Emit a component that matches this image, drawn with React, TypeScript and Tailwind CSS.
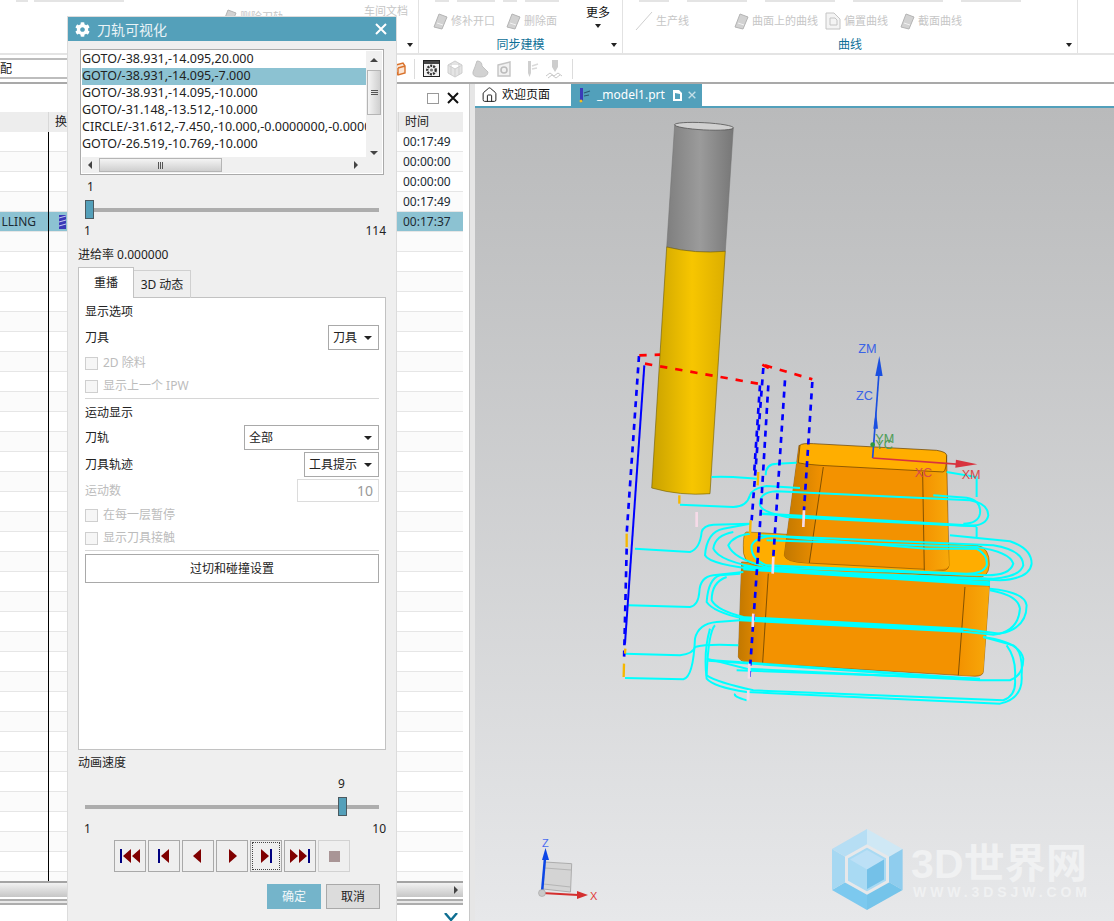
import React from 'react';
import { FaCog } from 'react-icons/fa';
import { House } from 'lucide-react';

const listRows = [
  'GOTO/-38.931,-14.095,20.000',
  'GOTO/-38.931,-14.095,-7.000',
  'GOTO/-38.931,-14.095,-10.000',
  'GOTO/-31.148,-13.512,-10.000',
  'CIRCLE/-31.612,-7.450,-10.000,-0.0000000,-0.00000',
  'GOTO/-26.519,-10.769,-10.000',
];

const times: Record<number, string> = { 0: '00:17:49', 1: '00:00:00', 2: '00:00:00', 3: '00:17:49', 4: '00:17:37' };
const tableRows = Array.from({ length: 38 }, (_, i) => i);

// toolpath traces, in 3x coordinates of the part area
const cyanLoops = [
  'M335 435 C400 432 450 440 475 440',
  'M240 518 L400 525 Q440 525 450 490 Q455 470 500 462 L600 468',
  'M480 520 Q475 480 530 478 L1110 505 Q1165 515 1165 550 Q1160 580 1110 582 L560 555 Q485 540 480 520',
  'M1000 490 L1100 497 Q1145 505 1140 545 Q1135 575 1090 575',
  'M497 430 Q497 395 530 395 L590 392',
  'M1040 420 L1130 435 L1130 495',
  'M1130 585 L1130 615',
  'M105 650 L270 660 Q300 650 305 600 Q310 580 340 578 L450 575',
  'M1050 610 L1230 628 Q1295 650 1295 695 Q1290 740 1200 745 L500 715 Q330 700 315 670 Q320 600 370 590 L450 575',
  'M480 610 L1180 640 Q1270 655 1270 700 Q1260 735 1180 740 L530 715 Q360 695 340 650 Q345 610 400 600',
  'M500 625 L1130 645 Q1230 660 1240 695 Q1230 730 1160 730 L500 705 Q400 680 385 640 Q400 610 450 605',
  'M520 612 L980 650 L1130 650 Q1165 670 1160 700 Q1150 725 1100 725 L500 700 Q450 680 455 640 Q465 615 520 612',
  'M85 820 L270 825 Q295 820 298 780 Q300 735 340 730 L430 720',
  'M1170 770 Q1275 780 1280 820 Q1280 890 1200 905 L1090 890 L420 855',
  'M1170 775 Q1255 790 1260 830 Q1255 900 1180 908 L1100 900 L420 865',
  'M430 860 Q340 840 320 810 Q325 740 360 730 L420 725',
  'M430 855 Q350 835 335 805 Q335 750 380 735',
  'M75 965 L240 970 Q280 965 285 945 Q320 935 415 940',
  'M75 1038 L250 1042 Q280 1035 285 920 Q295 875 350 870 L420 865',
  'M320 980 L440 1010 L1140 1045 L1230 1045 Q1270 1030 1270 980 Q1260 930 1150 915',
  'M330 890 Q310 960 320 1040 Q340 1065 440 1080 L1200 1115 Q1270 1100 1265 1030 Q1270 960 1240 940 L1150 915',
  'M345 880 Q325 900 320 1030 Q350 1050 460 1075 L1210 1105 Q1250 1090 1245 1040 Q1250 980 1220 940',
  'M410 1015 L1140 1040',
  'M405 1085 Q400 1095 440 1105',
];

const blueDashes = [
  'M117 72 L80 605',
  'M80 650 L72 990',
  'M490 108 L455 565',
  'M505 160 L478 610',
  'M480 160 L462 430',
  'M478 610 L448 1040',
  'M555 145 L520 675',
  'M637 150 L612 535',
];

const yellowBits = ['M238 490 L238 515', 'M475 420 L473 460', 'M452 565 L450 605', 'M80 605 L80 645', 'M76 950 L75 965', 'M72 995 L71 1035'];
const whiteBits = ['M290 540 L290 585', 'M612 535 L610 585', 'M520 675 L518 725', 'M460 845 L458 885', 'M448 995 L447 1040', 'M445 1075 L444 1105'];
const redDashes = ['M118 70 L180 68', 'M135 95 L480 156', 'M495 100 L637 142', 'M487 98 L525 118'];

function CloseX({ className, color }: { className: string; color: string }) {
  return (
    <svg className={className} viewBox="0 0 12 12" fill="none" stroke={color} strokeWidth="2">
      <path d="M1 1 L11 11 M11 1 L1 11" />
    </svg>
  );
}

function GrayIcon({ kind }: { kind: string }) {
  if (kind === 'line') {
    return (
      <svg className="h-[20px] w-[18px] shrink-0" viewBox="0 0 18 20" fill="none" stroke="#cfcfcf">
        <path d="M1 19 L17 1" />
      </svg>
    );
  }
  if (kind === 'page') {
    return (
      <svg className="h-[18px] w-[16px] shrink-0" viewBox="0 0 16 18" fill="#f4f4f4" stroke="#c4c4c4">
        <path d="M1 1 H9 L15 7 V17 H1 Z M5 6 H10 L12 8 V13 H5 Z" />
      </svg>
    );
  }
  return (
    <svg className="h-[18px] w-[16px] shrink-0" viewBox="0 0 16 18">
      <path d="M2 15 L7 2 L15 5 L10 17 Z" fill="#d2d2d2" stroke="#b4b4b4" />
      <path d="M5 11 L11 13" stroke="#f2f2f2" />
    </svg>
  );
}

function RibbonItem({ kind, label, gap }: { kind: string; label: string; gap: string }) {
  return (
    <div className={`flex items-center ${gap}`}>
      <GrayIcon kind={kind} />
      <span className="ml-[3px] whitespace-nowrap text-[11px] text-[#c6c6c6]">{label}</span>
    </div>
  );
}

function GroupLabel({ label }: { label?: string }) {
  return (
    <div className="relative flex h-[16px] items-center justify-center text-[12px] text-[#0d6f97]">
      {label}
      <span className="absolute right-[5px] top-[6px] h-0 w-0 border-x-[3px] border-t-[4px] border-x-transparent border-t-[#222]" />
    </div>
  );
}

// the row above is cut off by the window edge, only its lower edge shows
function ClippedRow({ className, widths }: { className: string; widths: string[] }) {
  return (
    <div className={`flex h-[2px] shrink-0 ${className}`}>
      {widths.map((w, i) => (
        <span key={i} className={`h-[2px] bg-[#e4e4e4] ${w}`} />
      ))}
    </div>
  );
}

function Ribbon() {
  return (
    <div className="flex h-[55px] shrink-0 border-b-2 border-[#e4e4e4] bg-white">
      <div className="flex w-[419px] shrink-0 flex-col border-r border-[#e2e2e2]">
        <ClippedRow className="gap-[6px] pl-[16px]" widths={['w-[12px]', 'w-[90px]']} />
        <div className="flex h-[36px] justify-end pr-[10px]">
          <div className="mr-[80px] mt-[6px]">
            <RibbonItem kind="shape" label="删除刀轨" gap="" />
          </div>
          <span className="mt-px text-[11px] text-[#c6c6c6]">车间文档</span>
        </div>
        <GroupLabel />
      </div>
      <div className="flex w-[204px] shrink-0 flex-col border-r border-[#e2e2e2]">
        <ClippedRow className="gap-[8px] pl-[16px]" widths={['w-[14px]', 'w-[38px]', 'w-[14px]', 'w-[34px]']} />
        <div className="flex h-[36px] pl-[13px] pt-[3px]">
          <RibbonItem kind="shape" label="修补开口" gap="mr-[10px]" />
          <RibbonItem kind="shape" label="删除面" gap="" />
          <div className="ml-[29px] flex flex-col items-center self-start">
            <span className="mt-[-1px] text-[12px] leading-[18px] text-[#111]">更多</span>
            <span className="mt-[2px] h-0 w-0 border-x-[3px] border-t-[4px] border-x-transparent border-t-[#222]" />
          </div>
        </div>
        <GroupLabel label="同步建模" />
      </div>
      <div className="flex w-[455px] shrink-0 flex-col border-r border-[#e2e2e2]">
        <ClippedRow className="gap-[18px] pl-[16px]" widths={['w-[30px]', 'w-[60px]', 'w-[70px]', 'w-[90px]', 'w-[60px]']} />
        <div className="flex h-[36px] pl-[12px] pt-[3px]">
          <RibbonItem kind="line" label="生产线" gap="mr-[44px]" />
          <RibbonItem kind="shape" label="曲面上的曲线" gap="mr-[7px]" />
          <RibbonItem kind="page" label="偏置曲线" gap="mr-[11px]" />
          <RibbonItem kind="shape" label="截面曲线" gap="" />
        </div>
        <GroupLabel label="曲线" />
      </div>
    </div>
  );
}

function ToolIcon({ children }: { children: React.ReactNode }) {
  return (
    <svg className="h-[20px] w-[20px] shrink-0" viewBox="0 0 20 20">
      {children}
    </svg>
  );
}

function Toolbar() {
  return (
    <div className="flex h-[27px] shrink-0 items-center bg-white">
      <div className="flex h-[21px] w-[390px] shrink-0 items-center border-y-2 border-[#bdbdbd] text-[12px] leading-none text-[#222]">
        配
      </div>
      <svg className="ml-[4px] h-[14px] w-[12px] shrink-0" viewBox="0 0 12 14" fill="#fbe6d5" stroke="#d9722c" strokeWidth="1.4">
        <path d="M2 3 L9 1 L11 4 V11 L4 13 L2 10 Z M4 6 L11 4 M4 6 V13" />
      </svg>
      <span className="ml-[8px] h-[20px] w-px bg-[#dcdcdc]" />
      <div className="ml-[8px] flex items-center gap-[5px]">
        <svg className="h-[17px] w-[17px] shrink-0" viewBox="0 0 17 17">
          <rect x="0.5" y="0.5" width="16" height="16" fill="#f2f2f2" stroke="#222" />
          <rect x="1" y="1" width="15" height="3" fill="#444" />
          <circle cx="8.5" cy="10" r="4.2" fill="none" stroke="#333" strokeWidth="2.4" strokeDasharray="2 1" />
          <circle cx="8.5" cy="10" r="1.6" fill="#777" />
        </svg>
        <ToolIcon>
          <path d="M10 2 L17 6 V14 L10 18 L3 14 V6 Z M3 6 L10 10 L17 6 M10 10 V18 M6 4 V16 M14 4 V16" fill="#e4e4e4" stroke="#cfcfcf" />
        </ToolIcon>
        <ToolIcon>
          <path d="M7 2 Q12 2 12 7 L18 13 Q18 18 10 18 Q2 18 3 13 Q5 8 7 2 Z" fill="#d2d2d2" stroke="#c2c2c2" />
        </ToolIcon>
        <ToolIcon>
          <path d="M3 6 L15 3 V17 H3 Z" fill="#f1f1f1" stroke="#c4c4c4" strokeWidth="1.4" />
          <circle cx="9" cy="11" r="3" fill="none" stroke="#bcbcbc" strokeWidth="1.6" />
        </ToolIcon>
        <ToolIcon>
          <path d="M8 2 H11 V14 L9.5 18 L8 14 Z" fill="#cfcfcf" />
          <path d="M12 7 L18 5 M12 10 L17 9" stroke="#dadada" strokeWidth="1.4" />
        </ToolIcon>
        <ToolIcon>
          <path d="M7 1 H13 V8 L10 13 L7 8 Z" fill="#cdcdcd" />
          <path d="M1 17 L5 14 L9 17 L13 14 L17 17 M3 19 L7 16 L11 19 L15 16" fill="none" stroke="#c8c8c8" />
        </ToolIcon>
      </div>
      <span className="ml-[7px] h-[20px] w-px bg-[#dcdcdc]" />
    </div>
  );
}

function LeftPanel() {
  return (
    <div className="flex h-full w-[475px] shrink-0 flex-col border-t-2 border-[#a9a9a9] bg-white">
      <div className="flex min-h-0 flex-1 border-r-[5px] border-[#e6e6e6]">
        <div className="flex min-w-0 flex-1 flex-col border-r border-[#c8c8c8] pr-[6px]">
          <div className="flex h-[28px] shrink-0 items-center justify-end pr-[4px]">
            <span className="mr-[8px] h-[11px] w-[12px] border border-[#999] bg-white" />
            <CloseX className="h-[12px] w-[12px]" color="#111" />
          </div>
          <div className="flex h-[20px] shrink-0 items-center bg-[#ededed] text-[12px] text-[#222]">
            <span className="h-full w-[49px] border-r border-[#d8d8d8]" />
            <span className="flex-1 pl-[6px]">换</span>
            <span className="flex h-full w-[65px] items-center border-l border-[#d8d8d8] pl-[6px]">时间</span>
          </div>
          <div className="min-h-0 flex-1 overflow-hidden">
            {tableRows.map((i) => (
              <div
                key={i}
                className={`flex h-[20px] items-center border-b border-[#e6e6e6] text-[12px] text-[#1c2a33] ${i === 4 ? 'bg-[#8cc2d2]' : i % 2 ? 'bg-[#fbfbfb]' : 'bg-white'}`}
              >
                <span className="flex h-[20px] w-[49px] shrink-0 items-center justify-end overflow-hidden border-r border-black pr-[12px]">
                  {i === 4 ? 'LLING' : ''}
                </span>
                <span className="flex-1 pl-[10px]">
                  {i === 4 && (
                    <svg className="h-[14px] w-[7px]" viewBox="0 0 7 14">
                      <rect width="7" height="14" fill="#3a3ab8" />
                      <path d="M0 3 L7 1 M0 7 L7 5 M0 11 L7 9" stroke="#c8ccf0" />
                    </svg>
                  )}
                </span>
                <span className="w-[60px] shrink-0">{times[i]}</span>
              </div>
            ))}
          </div>
          <div className="flex h-[16px] shrink-0 items-center justify-end border-t-2 border-[#a4a4a4] bg-gradient-to-b from-[#f2f2f2] to-[#c6c6c6] pr-[5px]">
            <span className="h-0 w-0 border-y-[4px] border-l-[4px] border-y-transparent border-l-[#444]" />
          </div>
          <div className="mt-[2px] h-[6px] shrink-0 border-y-2 border-[#adadad] bg-[#e8e8e8]" />
          <div className="flex h-[16px] shrink-0 items-end justify-end pr-[5px]">
            <svg className="h-[8px] w-[14px]" viewBox="0 0 14 8" fill="none" stroke="#0f6f92" strokeWidth="2.4">
              <path d="M1 0 L7 7 L13 0" />
            </svg>
          </div>
        </div>
      </div>
    </div>
  );
}

function Scene() {
  return (
    <svg className="block h-[815px] w-[639px]" viewBox="475 106 639 815">
      <defs>
        <linearGradient id="gray" x1="0" x2="1" y1="0" y2="0">
          <stop offset="0" stopColor="#7f7f7f" />
          <stop offset="0.5" stopColor="#9b9b9b" />
          <stop offset="1" stopColor="#777" />
        </linearGradient>
        <linearGradient id="yellow" x1="0" x2="1" y1="0" y2="0">
          <stop offset="0" stopColor="#c9a200" />
          <stop offset="0.55" stopColor="#f7c600" />
          <stop offset="1" stopColor="#dcae00" />
        </linearGradient>
        <linearGradient id="leftFace" x1="0" x2="1" y1="0" y2="0">
          <stop offset="0" stopColor="#c27800" />
          <stop offset="1" stopColor="#f39200" />
        </linearGradient>
        <linearGradient id="rightFace" x1="0" x2="1" y1="0" y2="0">
          <stop offset="0" stopColor="#f39200" />
          <stop offset="1" stopColor="#f8a90a" />
        </linearGradient>
      </defs>

      {/* tool */}
      <path d="M666.7 245 L674.7 122.7 L733.3 126 L725.3 249.3 Q695 252 666.7 245 Z" fill="url(#gray)" stroke="#6f6f6f" strokeWidth="0.5" />
      <ellipse cx="704" cy="124.3" rx="29.5" ry="3.6" transform="rotate(3 704 124.3)" fill="#d0d0d0" stroke="#555" strokeWidth="0.8" />
      <path d="M651.7 486 L666.7 245 Q695 252 725.3 249.3 L710 491.7 Q680 494 651.7 486 Z" fill="url(#yellow)" stroke="#6d5a00" strokeWidth="0.6" />

      <g transform="translate(600 330) scale(0.3333)">
        {/* lower block */}
        <path d="M425 690 L415 975 Q420 990 450 993 L1125 1033 Q1148 1033 1150 1020 L1168 765 L1168 740 Z" fill="#f39200" stroke="#5d3a00" strokeWidth="1.5" />
        <path d="M425 700 L415 975 Q420 990 488 993 L505 725 Z" fill="url(#leftFace)" />
        <path d="M1095 765 L1168 765 L1150 1020 Q1148 1033 1075 1030 Z" fill="url(#rightFace)" />
        <path d="M505 725 L488 993 M1095 765 L1075 1030" stroke="#4a3000" strokeWidth="2" fill="none" />
        {/* shelf */}
        <path d="M440 600 L1130 640 Q1170 645 1168 700 Q1165 740 1130 735 L470 700 Q425 695 430 640 Q430 600 440 600 Z" fill="#ffad00" stroke="#6b4800" strokeWidth="1.5" />
        {/* upper block */}
        <path d="M597 340 L553 670 Q555 690 620 693 L1030 715 Q1045 715 1047 700 L1040 370 L1030 420 Z" fill="#f39200" stroke="#5d3a00" strokeWidth="1.5" />
        <path d="M597 345 L553 670 Q555 690 628 693 L670 405 Z" fill="url(#leftFace)" />
        <path d="M968 420 L1038 420 L1047 700 Q1045 715 973 715 Z" fill="url(#rightFace)" />
        <path d="M670 405 L628 693 M968 420 L973 715" stroke="#4a3000" strokeWidth="2" fill="none" />
        <path d="M600 340 Q605 333 640 335 L1010 355 Q1040 360 1040 370 Q1040 415 1030 420 L660 400 Q600 395 595 392 Z" fill="#ffae00" stroke="#5d3a00" strokeWidth="2" />

        {/* cyan toolpath */}
        {cyanLoops.map((d) => (
          <path key={d} d={d} fill="none" stroke="#00ffff" strokeWidth="6" />
        ))}
        <path d="M430 708 L1170 755" stroke="#00ffff" strokeWidth="14" fill="none" />
        <path d="M420 860 L1090 895" stroke="#00ffff" strokeWidth="10" fill="none" />
        <path d="M325 985 L1140 1042" stroke="#00ffff" strokeWidth="8" fill="none" />
        <path d="M480 545 L1130 582" stroke="#00ffff" strokeWidth="7" fill="none" />

        {/* rapid moves */}
        <path d="M133 100 L75 935" stroke="#0000ff" strokeWidth="6" fill="none" />
        {blueDashes.map((d) => (
          <path key={d} d={d} fill="none" stroke="#0000ff" strokeWidth="8" strokeDasharray="18 16" />
        ))}
        {redDashes.map((d) => (
          <path key={d} d={d} fill="none" stroke="#ff0000" strokeWidth="8" strokeDasharray="22 24" />
        ))}
        {yellowBits.map((d) => (
          <path key={d} d={d} fill="none" stroke="#f6b800" strokeWidth="7" />
        ))}
        {whiteBits.map((d) => (
          <path key={d} d={d} fill="none" stroke="#f6dbe8" strokeWidth="8" />
        ))}

        {/* part axes */}
        <path d="M818 378 L838 110" stroke="#1a4fe0" strokeWidth="5" />
        <path d="M838 72 L826 132 L848 132 Z" fill="#1a4fe0" />
        <path d="M828 235 L820 290 L834 290 Z" fill="#1a4fe0" />
        <path d="M818 378 L1080 397" stroke="#d8333f" strokeWidth="5" />
        <path d="M1132 397 L1068 383 L1066 407 Z" fill="#d8333f" />
        <circle cx="818" cy="338" r="7" fill="#2f9a3c" />
        <g fontFamily="'Liberation Sans', sans-serif" fontSize="38">
          <text x="775" y="64" fill="#3a63e6">ZM</text>
          <text x="768" y="205" fill="#3a63e6">ZC</text>
          <text x="944" y="436" fill="#d84a4a">XC</text>
          <text x="1085" y="442" fill="#d84a4a">XM</text>
          <text x="826" y="332" fill="#4f9d57">YM</text>
          <text x="826" y="352" fill="#4f9d57">YC</text>
        </g>
      </g>

      {/* view triad */}
      <path d="M545 860 L571.7 861.7 L570.5 890 L543 887 Z" fill="#d4d4d4" stroke="#adadad" />
      <path d="M545 866 L571 868 M543.5 882 L570.5 885" stroke="#b5b5b5" fill="none" />
      <path d="M542 890 L545 856" stroke="#0c46e6" strokeWidth="2.5" />
      <path d="M545.5 846 L542 858 L549 858 Z" fill="#0c46e6" />
      <path d="M542 891 L578 893" stroke="#d42f2f" strokeWidth="2" />
      <path d="M588 893 L577 889 L577 897 Z" fill="#d42f2f" />
      <circle cx="542" cy="891" r="3.5" fill="#c9c9c9" stroke="#999" strokeWidth="0.5" />
      <g fontFamily="'Liberation Sans', sans-serif" fontSize="11">
        <text x="542" y="845" fill="#4a6cf0">Z</text>
        <text x="590" y="898" fill="#e03a3a">X</text>
      </g>

      {/* watermark */}
      <path d="M867 827 V867.5 L902.6 847 Z" fill="#cfe8f5" />
      <path d="M902.6 847 V888 L867 867.5 Z" fill="#8fcdee" />
      <path d="M902.6 888 L867 908 V867.5 Z" fill="#75c4ea" />
      <path d="M867 908 L832 888 L867 867.5 Z" fill="#7cc9ef" />
      <path d="M832 888 V847 L867 867.5 Z" fill="#a6d8f2" />
      <path d="M832 847 L867 827 V867.5 Z" fill="#b6def4" />
      <path d="M867 844 L887.5 855.5 V879.5 L867 891 L846.5 879.5 V855.5 Z" fill="#a9daf3" stroke="#e7e8ea" strokeWidth="3" />
      <path d="M867 848 L884 857.5 L867 867.5 L850 857.5 Z" fill="#bce0f6" />
      <path d="M867 867.5 L884 857.5 V877.5 L867 887 Z" fill="#74c1e8" />
      <text x="911" y="876" fill="#f0f1f2" fontSize="41" fontWeight="700" fontFamily="'Liberation Sans', 'Noto Sans CJK SC', sans-serif" textLength="176">
        3D世界网
      </text>
      <text x="913" y="895" fill="#f0f1f2" fontSize="14" fontWeight="700" fontFamily="'Liberation Sans', sans-serif" textLength="174">
        WWW.3DSJW.COM
      </text>
    </svg>
  );
}

function Viewport() {
  return (
    <div className="flex min-w-0 flex-1 flex-col">
      <div className="flex h-[24px] shrink-0 items-stretch border-t-2 border-[#a9a9a9] bg-white pl-px">
        <div className="flex w-[95px] items-center pl-[5px] text-[12px] text-[#111]">
          <House className="mr-[4px] h-[18px] w-[17px]" strokeWidth={1.4} color="#222" />
          欢迎页面
        </div>
        <div className="flex w-[131px] items-center bg-[#52a0bb] pl-[6px] text-[12px] text-white">
          <svg className="h-[15px] w-[14px] shrink-0" viewBox="0 0 14 15">
            <path d="M3 0 H6 V12 L4 15 L3 12 Z" fill="#3b3bb8" />
            <path d="M7 5 L13 3 M7 8 L12 7" stroke="#2a5a70" strokeWidth="1.2" />
            <circle cx="4" cy="13" r="1.5" fill="#f0c020" />
          </svg>
          <span className="ml-[6px]">_model1.prt</span>
          <svg className="ml-[8px] h-[11px] w-[9px] shrink-0" viewBox="0 0 9 11" fill="#fff">
            <path d="M0 0 H6 L9 3 V11 H0 Z M2 3 V9 H7 V4 Z" fillRule="evenodd" />
          </svg>
          <CloseX className="ml-[6px] h-[8px] w-[8px]" color="#c5dfe8" />
        </div>
      </div>
      <div className="h-[2px] shrink-0 bg-[#52a0bb]" />
      <div className="min-h-0 flex-1 overflow-hidden bg-gradient-to-b from-[#b9babb] to-[#e7e8ea]">
        <Scene />
      </div>
    </div>
  );
}

function Slider({ left, trackClass }: { left: string; trackClass: string }) {
  return (
    <div className={`relative h-[19px] ${trackClass}`}>
      <div className="absolute inset-x-0 top-[8px] h-[4px] bg-[#adadad]" />
      <div className={`absolute top-0 h-[19px] w-[9px] border border-[#4b5a60] bg-[#54a0ba] ${left}`} />
    </div>
  );
}

function CheckRow({ label, className }: { label: string; className: string }) {
  return (
    <div className={`flex h-[14px] items-center text-[#bcbcbc] ${className}`}>
      <span className="mr-[5px] h-[13px] w-[13px] border border-[#cfcfcf] bg-[#f6f6f6]" />
      {label}
    </div>
  );
}

function SelectRow({ label, value, width, className }: { label: string; value: string; width: string; className: string }) {
  return (
    <div className={`flex h-[25px] items-center justify-between ${className}`}>
      <span>{label}</span>
      <div className={`flex h-[25px] items-center justify-between border border-[#a9a9a9] pl-[4px] pr-[6px] ${width}`}>
        <span>{value}</span>
        <span className="h-0 w-0 border-x-[4px] border-t-[4px] border-x-transparent border-t-[#222]" />
      </div>
    </div>
  );
}

function TransportButton({ children, focus, disabled }: { children: React.ReactNode; focus?: boolean; disabled?: boolean }) {
  return (
    <div className={`flex h-[32px] w-[32px] items-center justify-center border ${disabled ? 'border-[#d2d2d2]' : 'border-[#a9a9a9]'} ${focus ? 'outline-1 -outline-offset-3 outline-dotted outline-[#444]' : ''}`}>
      <svg className="h-[16px] w-[24px]" viewBox="0 0 24 16">
        {children}
      </svg>
    </div>
  );
}

function Dialog() {
  return (
    <div className="absolute left-[68px] top-[17px] flex h-[904px] w-[328px] flex-col bg-[#efefef] text-[12px] text-[#222] shadow-[0_0_0_1px_#dcdcdc]">
      <div className="flex h-[24px] shrink-0 items-center bg-[#54a0ba] pl-[7px] pr-[9px] text-[14px] text-[#e9f3f6]">
        <FaCog className="h-[15px] w-[15px] text-white" />
        <span className="ml-[7px] flex-1">刀轨可视化</span>
        <CloseX className="h-[12px] w-[12px]" color="#fff" />
      </div>

      <div className="mx-[12px] mt-[8px] flex h-[126px] shrink-0 flex-col border border-[#aaa] bg-white p-px">
        <div className="flex min-h-0 flex-1">
          <div className="min-w-0 flex-1 overflow-hidden text-[12.5px]">
            {listRows.map((row, i) => (
              <div key={row} className={`flex h-[17px] items-center overflow-hidden whitespace-nowrap ${i === 1 ? 'bg-[#8cc2d2]' : ''}`}>
                {row}
              </div>
            ))}
          </div>
          <div className="relative w-[16px] shrink-0 bg-[#f0f0f0]">
            <span className="absolute left-[4px] top-[7px] h-0 w-0 border-x-[4px] border-b-[4px] border-x-transparent border-b-[#444]" />
            <div className="absolute inset-x-px top-[19px] flex h-[45px] flex-col items-center justify-center gap-px border border-[#b5b5b5] bg-gradient-to-r from-[#f4f4f4] to-[#cfcfcf]">
              <span className="h-px w-[7px] bg-[#555]" />
              <span className="h-px w-[7px] bg-[#555]" />
              <span className="h-px w-[7px] bg-[#555]" />
            </div>
            <span className="absolute bottom-[2px] left-[4px] h-0 w-0 border-x-[4px] border-t-[4px] border-x-transparent border-t-[#444]" />
          </div>
        </div>
        <div className="flex h-[16px] shrink-0 items-center bg-[#f0f0f0] pl-[6px] pr-[24px]">
          <span className="h-0 w-0 border-y-[4px] border-r-[4px] border-y-transparent border-r-[#444]" />
          <div className="ml-[7px] flex h-[14px] w-[123px] items-center justify-center gap-px border border-[#b5b5b5] bg-gradient-to-b from-[#f4f4f4] to-[#cfcfcf]">
            <span className="h-[7px] w-px bg-[#555]" />
            <span className="h-[7px] w-px bg-[#555]" />
            <span className="h-[7px] w-px bg-[#555]" />
          </div>
          <span className="ml-auto h-0 w-0 border-y-[4px] border-l-[4px] border-y-transparent border-l-[#444]" />
        </div>
      </div>

      <div className="ml-[19px] mt-[5px] h-[14px] leading-[14px]">1</div>
      <Slider left="left-[-5px]" trackClass="ml-[22px] mr-[17px] mt-[6px] shrink-0" />
      <div className="mx-[10px] mt-[5px] flex h-[14px] justify-between leading-[14px]">
        <span className="ml-[6px]">1</span>
        <span>114</span>
      </div>
      <div className="ml-[10px] mt-[10px] h-[14px] leading-[14px]">进给率 0.000000</div>

      <div className="relative z-10 ml-[10px] mt-[5px] flex h-[31px] shrink-0 items-start">
        <div className="flex h-[31px] w-[56px] items-center justify-center border border-b-0 border-[#c2c2c2] bg-white">重播</div>
        <div className="flex h-[28px] w-[57px] items-center justify-center self-end border border-b-0 border-l-0 border-[#d0d0d0]">3D 动态</div>
      </div>
      <div className="mx-[10px] mt-[-1px] flex h-[453px] shrink-0 flex-col border border-[#c2c2c2] bg-white px-[6px]">
        <div className="mt-[7px] h-[14px] leading-[14px]">显示选项</div>
        <SelectRow label="刀具" value="刀具" width="w-[51px]" className="mt-[6px]" />
        <CheckRow label="2D 除料" className="mt-[6px]" />
        <CheckRow label="显示上一个 IPW" className="mt-[9px]" />
        <div className="mt-[5px] h-px shrink-0 bg-[#d6d6d6]" />
        <div className="mt-[7px] h-[14px] leading-[14px]">运动显示</div>
        <SelectRow label="刀轨" value="全部" width="w-[135px]" className="mt-[5px]" />
        <SelectRow label="刀具轨迹" value="工具提示" width="w-[75px]" className="mt-[2px]" />
        <div className="mt-[2px] flex h-[23px] items-center justify-between text-[#bcbcbc]">
          <span>运动数</span>
          <div className="flex h-[23px] w-[82px] items-center justify-end border border-[#dcdcdc] pr-[5px] text-[14px] text-[#9a9a9a]">10</div>
        </div>
        <CheckRow label="在每一层暂停" className="mt-[6px]" />
        <CheckRow label="显示刀具接触" className="mt-[9px]" />
        <div className="mt-[5px] h-px shrink-0 bg-[#d6d6d6]" />
        <div className="mt-[3px] flex h-[29px] shrink-0 items-center justify-center border border-[#a9a9a9]">过切和碰撞设置</div>
      </div>

      <div className="ml-[10px] mt-[6px] h-[14px] leading-[14px]">动画速度</div>
      <div className="ml-[270px] mt-[7px] h-[14px] leading-[14px]">9</div>
      <Slider left="left-[253px]" trackClass="ml-[17px] mr-[17px] mt-[6px] shrink-0" />
      <div className="mx-[10px] mt-[6px] flex h-[14px] justify-between leading-[14px]">
        <span className="ml-[6px]">1</span>
        <span>10</span>
      </div>

      <div className="ml-[46px] mt-[4px] flex h-[32px] shrink-0 gap-[2px]">
        <TransportButton>
          <path d="M2 1 H4 V15 H2 Z" fill="#000080" />
          <path d="M13 1 V15 L5 8 Z M22 1 V15 L14 8 Z" fill="#800000" />
        </TransportButton>
        <TransportButton>
          <path d="M6 1 H8 V15 H6 Z" fill="#000080" />
          <path d="M17 1 V15 L9 8 Z" fill="#800000" />
        </TransportButton>
        <TransportButton>
          <path d="M15 1 V15 L7 8 Z" fill="#800000" />
        </TransportButton>
        <TransportButton>
          <path d="M9 1 V15 L17 8 Z" fill="#800000" />
        </TransportButton>
        <TransportButton focus>
          <path d="M7 1 V15 L15 8 Z" fill="#800000" />
          <path d="M16 1 H18 V15 H16 Z" fill="#000080" />
        </TransportButton>
        <TransportButton>
          <path d="M2 1 V15 L10 8 Z M11 1 V15 L19 8 Z" fill="#800000" />
          <path d="M20 1 H22 V15 H20 Z" fill="#000080" />
        </TransportButton>
        <TransportButton disabled>
          <rect x="7" y="3" width="11" height="11" fill="#a99596" />
        </TransportButton>
      </div>

      <div className="mr-[16px] mt-[12px] flex h-[25px] shrink-0 justify-end gap-[5px]">
        <div className="flex w-[54px] items-center justify-center bg-[#74b4ca] text-[#f2f8fa]">确定</div>
        <div className="flex w-[54px] items-center justify-center border border-[#a9a9a9] bg-[#dcdcdc]">取消</div>
      </div>
    </div>
  );
}

export default function App() {
  return (
    <div className="relative flex h-[921px] w-[1114px] flex-col overflow-hidden bg-white font-['Noto_Sans','Noto_Sans_CJK_SC',sans-serif]">
      <Ribbon />
      <Toolbar />
      <div className="flex min-h-0 flex-1">
        <LeftPanel />
        <Viewport />
      </div>
      <Dialog />
    </div>
  );
}
